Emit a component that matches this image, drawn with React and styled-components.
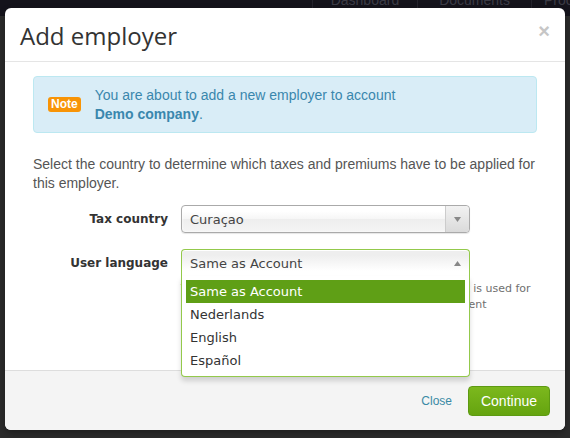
import styled, { createGlobalStyle } from "styled-components";

const GlobalStyle = createGlobalStyle`
  body {
    margin: 0;
    background: #2a2a2a;
    overflow: hidden;
    font-family: "Liberation Sans", Arial, sans-serif;
  }
`;

const Styled = {
  Page: styled.div`
    position: relative;
    height: 438px;
    background: #2b2b2b;
  `,

  TopNav: styled.div`
    height: 16px;
    background: #14131b;
    display: flex;
    justify-content: flex-end;
    overflow: hidden;
  `,

  NavTab: styled.div`
    height: 16px;
    padding: 0 ${({ $pad }) => $pad}px;
    border-left: 1px solid #24232c;
    font-family: "Liberation Sans", Arial, sans-serif;
    font-size: 14px;
    line-height: 16px;
    color: #3c3c46;
    margin-top: -8px;
    white-space: nowrap;

    &:last-child {
      padding-right: 0;
      width: 26px;
      overflow: hidden;
    }
  `,

  Modal: styled.div`
    position: absolute;
    top: 8px;
    left: 5px;
    width: 560px;
    height: 422px;
    background: #fff;
    border-radius: 6px;
    box-shadow: 0 3px 7px rgba(0, 0, 0, 0.3);
    display: flex;
    flex-direction: column;
  `,

  Header: styled.div`
    height: 53px;
    padding: 0 15px 0 15px;
    border-bottom: 1px solid #e5e5e5;
    display: flex;
    align-items: center;
    justify-content: space-between;

    h3 {
      margin: 0;
      font-family: "Open Sans", sans-serif;
      font-size: 24px;
      font-weight: 500;
      color: #333;
      padding-top: 1px;
    }

    .close {
      font-family: "Liberation Sans", Arial, sans-serif;
      font-size: 20px;
      font-weight: bold;
      color: #c6c6c6;
      line-height: 20px;
      margin-top: -8px;
    }
  `,

  Body: styled.div`
    flex: 1;
    padding: 14px 28px 0;
  `,

  Alert: styled.div`
    height: 55px;
    padding: 0 14px;
    background: #d9edf7;
    border: 1px solid #bce8f1;
    border-radius: 4px;
    display: flex;
    align-items: center;
    gap: 14px;
    font-size: 14px;
    line-height: 19px;
    color: #3a87ad;

    b {
      font-weight: bold;
    }
  `,

  Badge: styled.span`
    padding: 0 3px;
    height: 15px;
    line-height: 15px;
    background: #f89406;
    border-radius: 3px;
    color: #fff;
    font-size: 12px;
    font-weight: bold;
  `,

  Intro: styled.p`
    margin: 22px 0 0;
    font-size: 14px;
    line-height: 19px;
    color: #555;
  `,

  Row: styled.div`
    display: flex;
    align-items: flex-start;
    gap: 13px;
    margin-top: ${({ $top }) => $top}px;
  `,

  Label: styled.label`
    width: 135px;
    text-align: right;
    font-family: "DejaVu Sans", Verdana, sans-serif;
    font-size: 12px;
    font-weight: bold;
    color: #333;
    line-height: 29px;
  `,

  Field: styled.div`
    display: flex;
    flex-direction: column;
  `,

  Help: styled.div`
    margin-top: 4px;
    font-family: "DejaVu Sans", Verdana, sans-serif;
    font-size: 11px;
    line-height: 16px;
    color: #6f6f6f;
    white-space: nowrap;
  `,

  SelectBox: styled.div`
    position: relative;
    width: 289px;
    height: 28px;
    box-sizing: border-box;
    border: 1px solid ${({ $open }) => ($open ? "#93c94b" : "#aaa")};
    border-radius: ${({ $open }) => ($open ? "4px 4px 0 0" : "4px")};
    border-bottom-color: ${({ $open }) => ($open ? "transparent" : "#aaa")};
    background: ${({ $open }) =>
      $open
        ? "linear-gradient(#eee 20%, #fff 80%)"
        : "linear-gradient(#fff 20%, #f6f6f6 50%, #eee 52%, #f4f4f4 100%)"};
    box-shadow: ${({ $open }) =>
      $open ? "0 1px 0 #fff inset" : "0 0 3px #fff inset, 0 1px 1px rgba(0,0,0,0.1)"};
    display: flex;
    align-items: center;
    font-family: "DejaVu Sans", Verdana, sans-serif;
    font-size: 13px;
    color: #444;
  `,

  SelectValue: styled.span`
    flex: 1;
    padding: 1px 0 0 8px;
  `,

  ArrowCell: styled.span`
    width: 23px;
    align-self: stretch;
    display: flex;
    align-items: center;
    justify-content: center;
    border-left: ${({ $open }) => ($open ? "none" : "1px solid #ccc")};
    background: ${({ $open }) =>
      $open ? "transparent" : "linear-gradient(#f2f2f2, #dadada)"};
    border-radius: 0 4px 4px 0;
  `,

  Drop: styled.div`
    position: absolute;
    top: 100%;
    left: -1px;
    right: -1px;
    background: #fff;
    border: 1px solid #93c94b;
    border-top: none;
    border-radius: 0 0 4px 4px;
    box-shadow: 0 4px 5px rgba(0, 0, 0, 0.15);
    padding: 4px 4px 4px;
    z-index: 5;
  `,

  Option: styled.div`
    height: 23px;
    line-height: 23px;
    padding: 0 4px;
    color: ${({ $active }) => ($active ? "#fff" : "#333")};
    background: ${({ $active }) => ($active ? "#5f9f16" : "transparent")};
  `,

  Footer: styled.div`
    height: 59px;
    padding: 0 15px;
    background: #f4f4f4;
    border-top: 1px solid #ddd;
    border-radius: 0 0 6px 6px;
    display: flex;
    align-items: center;
    justify-content: flex-end;
    gap: 16px;
  `,

  CloseLink: styled.a`
    font-size: 12px;
    color: #3a8aa5;
    text-decoration: none;
    margin-top: 1px;
  `,

  Continue: styled.button`
    width: 82px;
    height: 30px;
    border: 1px solid #5d9a12;
    border-radius: 4px;
    background: linear-gradient(#7cb81d, #65a40f);
    color: #fff;
    font-family: "Liberation Sans", Arial, sans-serif;
    font-size: 14px;
    padding: 0;
    margin-top: 1px;
  `,
};

function Arrow({ up }) {
  return (
    <svg width="7" height="5" viewBox="0 0 7 5">
      <path d={up ? "M0 5 L3.5 0 L7 5 Z" : "M0 0 L7 0 L3.5 5 Z"} fill="#888" />
    </svg>
  );
}

function Select({ value, options, open }) {
  return (
    <Styled.SelectBox $open={open}>
      <Styled.SelectValue>{value}</Styled.SelectValue>
      <Styled.ArrowCell $open={open}>
        <Arrow up={open} />
      </Styled.ArrowCell>
      {open && (
        <Styled.Drop>
          {options.map((o) => (
            <Styled.Option key={o} $active={o === value}>
              {o}
            </Styled.Option>
          ))}
        </Styled.Drop>
      )}
    </Styled.SelectBox>
  );
}

function App() {
  return (
    <>
      <GlobalStyle />
      <Styled.Page>
        <Styled.TopNav>
          <Styled.NavTab $pad={18}>Dashboard</Styled.NavTab>
          <Styled.NavTab $pad={21}>Documents</Styled.NavTab>
          <Styled.NavTab $pad={12}>Processing</Styled.NavTab>
        </Styled.TopNav>

        <Styled.Modal>
          <Styled.Header>
            <h3>Add employer</h3>
            <span className="close">×</span>
          </Styled.Header>

          <Styled.Body>
            <Styled.Alert>
              <Styled.Badge>Note</Styled.Badge>
              <div>
                You are about to add a new employer to account
                <br />
                <b>Demo company</b>.
              </div>
            </Styled.Alert>

            <Styled.Intro>
              Select the country to determine which taxes and premiums have to
              be applied for this employer.
            </Styled.Intro>

            <Styled.Row $top={12}>
              <Styled.Label>Tax country</Styled.Label>
              <Select value="Curaçao" />
            </Styled.Row>

            <Styled.Row $top={15}>
              <Styled.Label>User language</Styled.Label>
              <Styled.Field>
                <Select
                  open
                  value="Same as Account"
                  options={["Same as Account", "Nederlands", "English", "Español"]}
                />
                <Styled.Help>
                  The preferred language of the employer's users that is used for
                  <br />
                  e-mails, reports and texts in the employer environment
                </Styled.Help>
              </Styled.Field>
            </Styled.Row>
          </Styled.Body>

          <Styled.Footer>
            <Styled.CloseLink href="#">Close</Styled.CloseLink>
            <Styled.Continue>Continue</Styled.Continue>
          </Styled.Footer>
        </Styled.Modal>
      </Styled.Page>
    </>
  );
}

export default App;
